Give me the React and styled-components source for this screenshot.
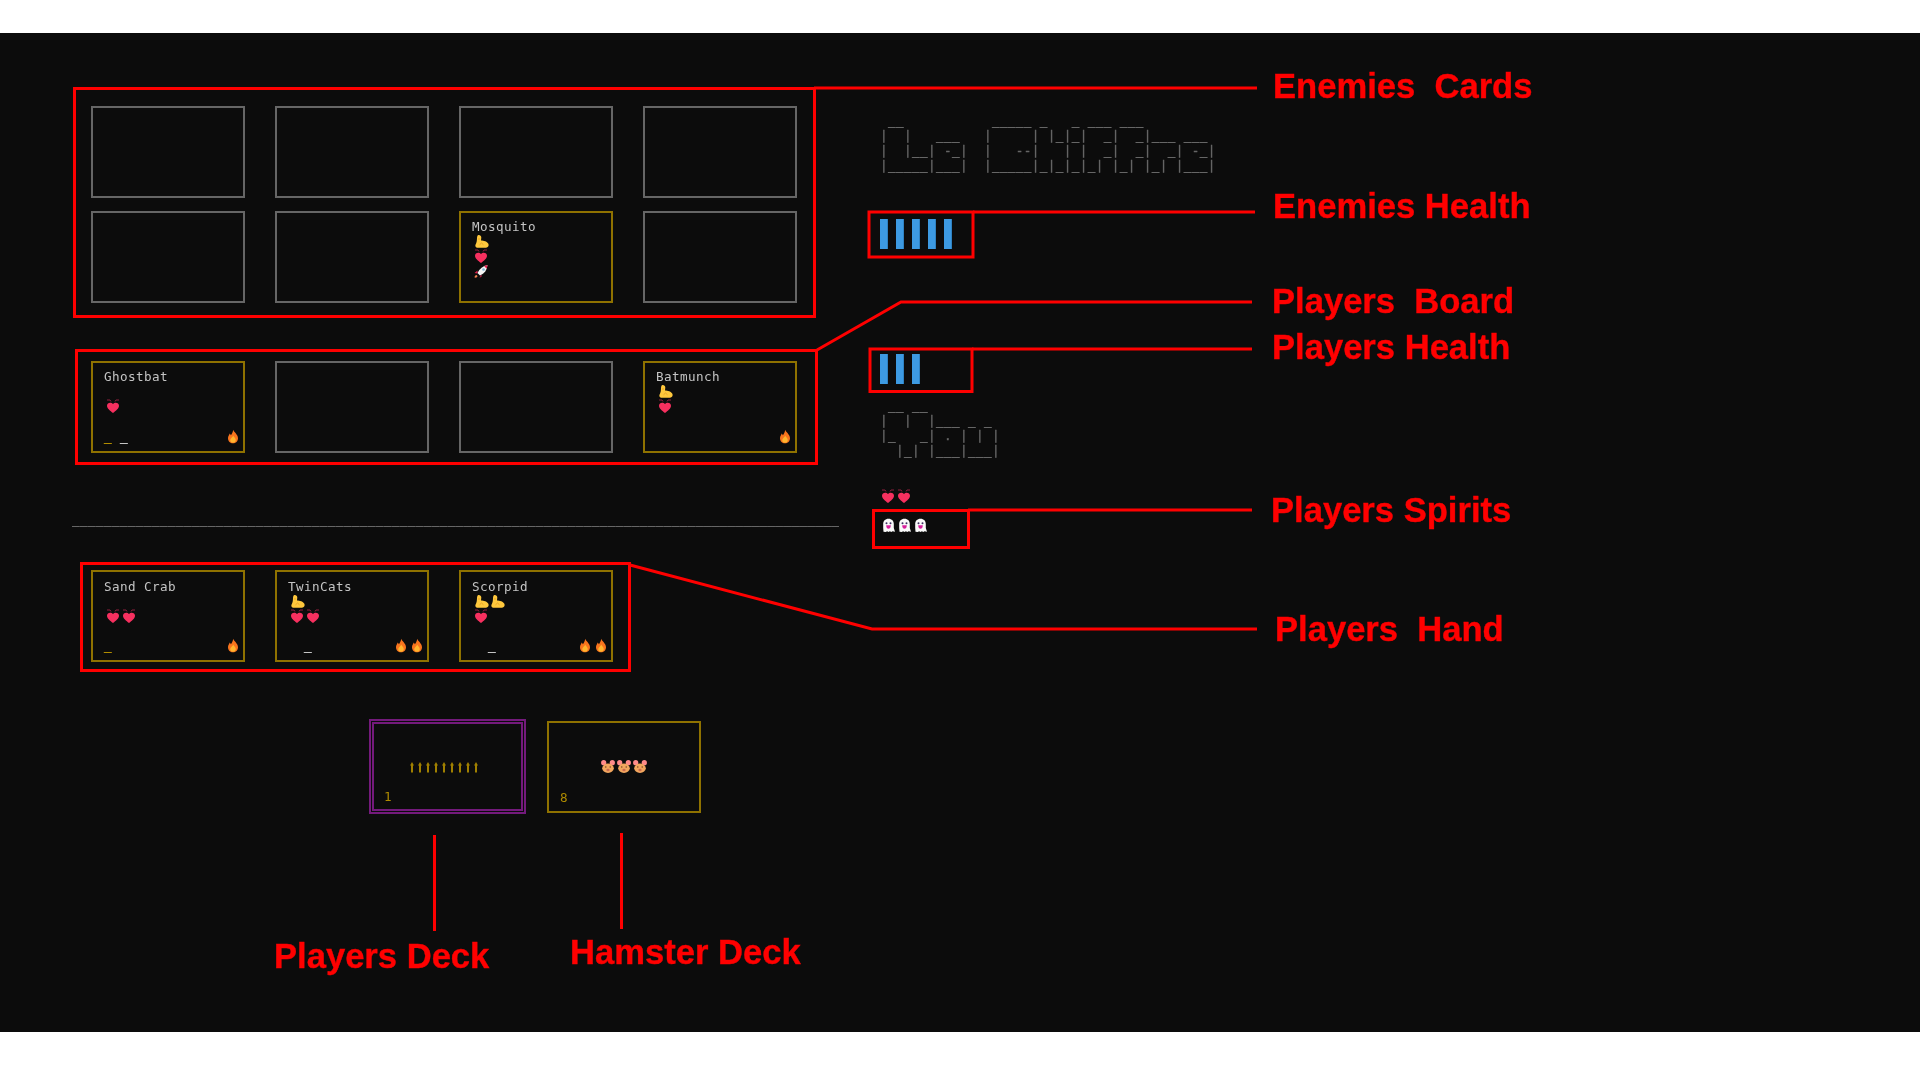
import React from 'react';
import styled, { createGlobalStyle } from 'styled-components';

const GlobalStyle = createGlobalStyle`
  html, body {
    margin: 0;
    padding: 0;
    background: #ffffff;
  }
`;

const Page = styled.div`
  position: relative;
  width: 1920px;
  height: 1080px;
  padding-top: 33px;
  box-sizing: border-box;
  overflow: hidden;
`;

const Screen = styled.div`
  height: 999px;
  box-sizing: border-box;
  background: #0c0c0c;
  padding: 73px 0 0 91px;
  display: flex;
  gap: 83px;
  font-family: "DejaVu Sans Mono", "Liberation Mono", monospace;
  font-size: 12.6px;
  letter-spacing: 0.41px;
  line-height: 15px;
  color: #c4c4c4;
`;

const LeftColumn = styled.div`
  width: 706px;
  display: flex;
  flex-direction: column;
  will-change: transform;
`;

const RightColumn = styled.div`
  display: flex;
  flex-direction: column;
  padding-top: 7px;
  will-change: transform;
`;

const CardRow = styled.div`
  display: flex;
  gap: 30px;
  margin-top: ${p => p.$before || 0}px;
  margin-bottom: ${p => p.$after || 0}px;
`;

const Card = styled.div`
  width: 154px;
  height: 92px;
  box-sizing: border-box;
  position: relative;
  border: 2px solid ${p => (p.$filled ? '#8f7200' : '#666666')};
  padding: 6.5px 0 0 11px;
`;

const Name = styled.div`
  height: 15px;
  white-space: pre;
`;

const IconLine = styled.div`
  height: 15px;
  display: flex;
  align-items: center;
  padding-left: 1px;
`;

const CostRow = styled.div`
  position: absolute;
  left: 11px;
  right: 2px;
  bottom: 7px;
  height: 15px;
  display: flex;
  justify-content: space-between;
  align-items: flex-end;
`;

const Dashes = styled.span`
  white-space: pre;
  line-height: 15px;
  -webkit-text-stroke: 0.4px currentColor;
`;

const GoldDash = styled.span`
  color: #b08c00;
`;

const Flames = styled.div`
  display: flex;
`;

const Divider = styled.div`
  width: 768px;
  margin: 59.5px 0 0 -19px;
  height: 15px;
  overflow: hidden;
  white-space: pre;
  color: #666666;
  -webkit-text-stroke: 0.3px #666666;
`;

const Decks = styled.div`
  display: flex;
  align-items: center;
  gap: 21px;
  margin: 57px 0 0 278px;
`;

const Deck = styled.div`
  position: relative;
  box-sizing: border-box;
  display: flex;
  align-items: center;
  justify-content: center;
  width: ${p => (p.$double ? 157 : 154)}px;
  height: ${p => (p.$double ? 95 : 92)}px;
  border: ${p => (p.$double ? '5px double #741a7c' : '2px solid #8f7200')};
`;

const DeckCount = styled.span`
  position: absolute;
  left: ${p => (p.$double ? 10 : 11)}px;
  bottom: ${p => (p.$double ? 5 : 6)}px;
  color: #b08c00;
`;

const Arrows = styled.div`
  display: flex;
  padding-right: 8px;
`;

const AsciiArt = styled.pre`
  margin: 0 0 ${p => p.$after || 0}px;
  font: inherit;
  color: #666666;
  white-space: pre;
  -webkit-text-stroke: 0.3px #666666;
`;

const Bars = styled.div`
  display: flex;
  gap: 8px;
  height: 30px;
  margin-bottom: ${p => p.$after}px;
`;

const Bar = styled.div`
  width: 8px;
  box-sizing: border-box;
  background: #3d9ae2;
  border-right: 1px solid #2f82c2;
`;

const IconRow = styled.div`
  display: flex;
  height: 15px;
  align-items: center;
  margin-bottom: ${p => p.$after || 0}px;
`;

const Annotations = styled.svg`
  position: absolute;
  left: 0;
  top: 0;
  pointer-events: none;
`;

const Label = styled.div`
  position: absolute;
  left: ${p => p.$x}px;
  top: ${p => p.$y}px;
  font-family: "Liberation Sans", Arial, sans-serif;
  font-weight: bold;
  font-size: 34.6px;
  line-height: 40px;
  color: #ff0000;
  white-space: pre;
  -webkit-text-stroke: 0.4px #ff0000;
`;

// emoji drawn by hand, 16px cell each
const Cell = styled.svg`
  width: ${p => p.$w || 16}px;
  height: 15px;
  flex: none;
`;

const Muscle = () => (
  <Cell viewBox="0 0 16 15">
    <path d="M5.500 1C7 .8 8.300 2 8.300 3.500L8 6.500C10.500 6.500 14.500 7.500 15.500 10 16 12 15 13.500 13 13.700H4C2.500 13.500 2 12 2.500 10.800 3.500 9 4 6.500 4 4 4 2.500 4.500 1.200 5.500 1z" fill="#ffc83d" />
    <path d="M6.500 10.800l2-1.800 2 1.800M5 5h2" stroke="#e8a52a" strokeWidth="1" fill="none" />
  </Cell>
);

const Heart = () => (
  <Cell viewBox="0 0 16 15">
    <path d="M8 14C5.200 11.800 2 9.600 2 6.800c0-3.100 4-4.200 6-1.700 2-2.500 6-1.400 6 1.700C14 9.600 10.800 11.800 8 14z" fill="#f7305f" />
    <path d="M2 1h3l1 1.500M14 1h-3l-1 1.500" stroke="#8e1f3c" strokeWidth="1" fill="none" />
  </Cell>
);

const Rocket = () => (
  <Cell viewBox="0 0 16 15">
    <path d="M4.500 6.500 1.500 9l3 .5zM8 11 6.500 14 9 12z" fill="#e0204f" />
    <path d="M14.500 1C10 2 6.500 4.500 4.500 9L7 11.500C11.500 9.500 14 6 14.500 1z" fill="#f5f5f5" />
    <path d="M14.500 1 11 2 13.700 4.700z" fill="#e0204f" />
    <circle cx="10.500" cy="5.500" r="1.300" fill="#7fb6d6" />
    <path d="M1.500 13.500c0-1.500 1-2.500 2-2.500l1 1c0 1-1 2-3 1.500z" fill="#f08050" />
  </Cell>
);

const Flame = () => (
  <Cell viewBox="0 0 16 15">
    <path d="M8.200.8c.4 2.200 4.800 4.600 4.800 8.400 0 3-2.200 5-5 5s-5-2-5-5c0-2.200 1.200-3.200 1.800-4.800.6.600.9 1.200 1 1.900C7 5 8 3 8.200.8z" fill="#f8741d" />
    <path d="M8.200 6.400c.4 1.400 2.600 2.600 2.600 4.700 0 1.700-1.200 2.700-2.800 2.700s-2.800-1-2.800-2.700c0-2 2.600-2.800 3-4.700z" fill="#ffb52e" />
  </Cell>
);

const Ghost = () => (
  <Cell viewBox="0 0 16 15">
    <path d="M8.500 .8c3.400 0 5.300 2.400 5.300 5.200v4l1.200 3.700-2.400-.4-1.300.6-1.400-.6-1.400.6-1.400-.6-1.300.6-2.300-.2L3.200 10V6c0-2.800 1.900-5.200 5.300-5.200z" fill="#fafafa" />
    <circle cx="6.500" cy="5.200" r="1" fill="#3a3060" />
    <circle cx="10.500" cy="5.200" r="1" fill="#3a3060" />
    <path d="M6.200 7.200h4.600c0 2.400-1 3.600-2.300 3.600S6.200 9.600 6.200 7.200z" fill="#d61f9c" />
  </Cell>
);

const Hamster = () => (
  <Cell viewBox="0 0 16 15">
    <circle cx="3.700" cy="3.700" r="2.600" fill="#ff8a8a" />
    <circle cx="12.300" cy="3.700" r="2.600" fill="#ff8a8a" />
    <ellipse cx="8" cy="9.300" rx="5.800" ry="4.700" fill="#f2a65e" />
    <circle cx="5.800" cy="8" r=".7" fill="#6b3a1e" />
    <circle cx="10.200" cy="8" r=".7" fill="#6b3a1e" />
    <ellipse cx="8" cy="11" rx="1.600" ry="1.300" fill="#c96a50" />
  </Cell>
);

const Arrow = () => (
  <Cell $w={8} viewBox="0 0 8 15">
    <path d="M4 3 6 6.500H5V13.500H3V6.500H2z" fill="#a08000" />
  </Cell>
);

const repeat = (n, Icon) => Array.from({ length: n }, (_, i) => <Icon key={i} />);

const GameCard = ({ name, power = 0, health = 0, extra, cost = 0, dashes }) => {
  if (!name) return <Card />;
  return (
    <Card $filled>
      <Name>{name}</Name>
      <IconLine>{repeat(power, Muscle)}</IconLine>
      <IconLine>{repeat(health, Heart)}</IconLine>
      {extra && <IconLine><Rocket /></IconLine>}
      {cost > 0 && (
        <CostRow>
          <Dashes>{dashes}</Dashes>
          <Flames>{repeat(cost, Flame)}</Flames>
        </CostRow>
      )}
    </Card>
  );
};

const leChiffre = [
  ' __           _____ _   _ ___ ___',
  '|  |   ___   |     | |_|_|  _|  _|___ ___',
  '|  |__| -_|  |   --|   | |  _|  _|  _| -_|',
  '|_____|___|  |_____|_|_|_|_| |_| |_| |___|',
].join('\n');

const you = [
  ' __ __',
  '|  |  |___ _ _',
  '|_   _| . | | |',
  '  |_| |___|___|',
].join('\n');

const App = () => (
  <Page>
    <GlobalStyle />
    <Screen>
      <LeftColumn>
        <CardRow $after={12.5}>
          <GameCard /><GameCard /><GameCard /><GameCard />
        </CardRow>
        <CardRow $after={58}>
          <GameCard /><GameCard />
          <GameCard name="Mosquito" power={1} health={1} extra />
          <GameCard />
        </CardRow>
        <CardRow>
          <GameCard name="Ghostbat" health={1} cost={1} dashes={<><GoldDash>_</GoldDash> _</>} />
          <GameCard /><GameCard />
          <GameCard name="Batmunch" power={1} health={1} cost={1} />
        </CardRow>
        <Divider>{'_'.repeat(96)}</Divider>
        <CardRow $before={43}>
          <GameCard name="Sand Crab" health={2} cost={1} dashes={<GoldDash>_</GoldDash>} />
          <GameCard name="TwinCats" power={1} health={2} cost={2} dashes="  _" />
          <GameCard name="Scorpid" power={2} health={1} cost={2} dashes="  _" />
        </CardRow>
        <Decks>
          <Deck $double>
            <Arrows>{repeat(9, Arrow)}</Arrows>
            <DeckCount $double>1</DeckCount>
          </Deck>
          <Deck>
            {repeat(3, Hamster)}
            <DeckCount>8</DeckCount>
          </Deck>
        </Decks>
      </LeftColumn>
      <RightColumn>
        <AsciiArt $after={46}>{leChiffre}</AsciiArt>
        <Bars $after={105}>{repeat(5, Bar)}</Bars>
        <Bars $after={14}>{repeat(3, Bar)}</Bars>
        <AsciiArt $after={31}>{you}</AsciiArt>
        <IconRow $after={14}>{repeat(2, Heart)}</IconRow>
        <IconRow>{repeat(3, Ghost)}</IconRow>
      </RightColumn>
    </Screen>

    <Annotations width="1920" height="1080" fill="none" stroke="#ff0000" strokeWidth="3">
      <rect x="74.500" y="88.500" width="740" height="228" />
      <rect x="76.500" y="350.500" width="740" height="113" />
      <rect x="81.500" y="563.500" width="548" height="107" />
      <rect x="869" y="212" width="104" height="45" />
      <rect x="870" y="349" width="102" height="42.500" />
      <rect x="873.500" y="510.500" width="95" height="37" />
      <path d="M814 88H1257" />
      <path d="M973 212H1255" />
      <path d="M817 350L901 302H1252" />
      <path d="M972 349H1252" />
      <path d="M968 510H1252" />
      <path d="M630 565L872 629H1257" />
      <path d="M434.500 835V931" />
      <path d="M621.500 833V929" />
    </Annotations>

    <Label $x={1273} $y={66}>Enemies  Cards</Label>
    <Label $x={1273} $y={186}>Enemies Health</Label>
    <Label $x={1272} $y={281}>Players  Board</Label>
    <Label $x={1272} $y={327}>Players Health</Label>
    <Label $x={1271} $y={490}>Players Spirits</Label>
    <Label $x={1275} $y={609}>Players  Hand</Label>
    <Label $x={274} $y={936}>Players Deck</Label>
    <Label $x={570} $y={932}>Hamster Deck</Label>
  </Page>
);

export default App;
